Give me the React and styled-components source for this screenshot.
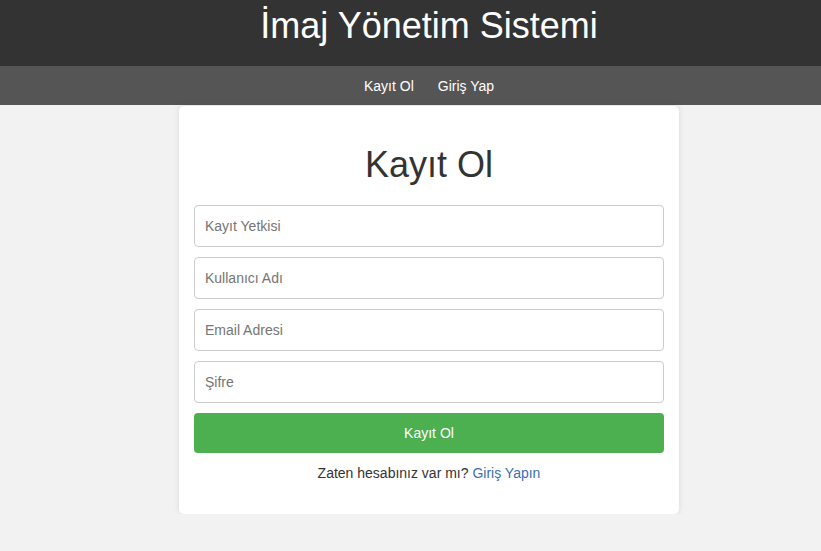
import React from "react";
import styled, { createGlobalStyle } from "styled-components";

const GlobalStyle = createGlobalStyle`
  body {
    margin: 0;
    background: #f2f2f2;
    font-family: "Liberation Sans", Arial, sans-serif;
    color: #333;
  }
`;

// the page is centred a little right of the window middle
const Page = styled.div`
  padding-left: 37px;
`;

const Header = styled.header`
  height: 66px;
  box-sizing: border-box;
  padding-top: 7px;
  margin-left: -37px;
  padding-left: 37px;
  background: #333;
  text-align: center;
`;

const Title = styled.h1`
  margin: 0;
  font-size: 36px;
  font-weight: normal;
  line-height: 37px;
  color: #fff;
`;

const Nav = styled.nav`
  height: 39px;
  margin-left: -37px;
  padding-left: 37px;
  background: #555;
  display: flex;
  justify-content: center;
  align-items: center;
`;

const NavLink = styled.a`
  padding: 0 12px;
  font-size: 14px;
  color: #fff;
  text-decoration: none;
`;

const Card = styled.div`
  width: 500px;
  box-sizing: border-box;
  margin: 1px auto 0;
  padding: 15px;
  background: #fff;
  border-radius: 5px;
  box-shadow: 0 0 6px rgba(0, 0, 0, 0.1);
`;

const Heading = styled.h2`
  margin: 24px 0 20px;
  font-size: 36px;
  font-weight: normal;
  line-height: 40px;
  text-align: center;
  color: #333;
`;

const Form = styled.form`
  display: flex;
  flex-direction: column;
  gap: 10px;
`;

const Input = styled.input`
  height: 42px;
  box-sizing: border-box;
  padding: 0 10px;
  border: 1px solid #ccc;
  border-radius: 4px;
  font-family: inherit;
  font-size: 14px;
  color: #333;
  outline: none;

  &::placeholder {
    color: #757575;
  }
`;

const Button = styled.button`
  height: 40px;
  border: none;
  border-radius: 4px;
  background: #4caf50;
  color: #fff;
  font-family: inherit;
  font-size: 14px;
  cursor: pointer;
`;

const Footer = styled.p`
  margin: 12px 0 18px;
  font-size: 14px;
  line-height: 16px;
  text-align: center;
`;

const Link = styled.a`
  color: #3b6fb0;
  text-decoration: none;
`;

const App = () => {
  const fields = ["Kayıt Yetkisi", "Kullanıcı Adı", "Email Adresi", "Şifre"];

  return (
    <Page>
      <GlobalStyle />
      <Header>
        <Title>İmaj Yönetim Sistemi</Title>
      </Header>
      <Nav>
        <NavLink href="#">Kayıt Ol</NavLink>
        <NavLink href="#">Giriş Yap</NavLink>
      </Nav>
      <Card>
        <Heading>Kayıt Ol</Heading>
        <Form onSubmit={(e) => e.preventDefault()}>
          {fields.map((f) => (
            <Input key={f} placeholder={f} type={f === "Şifre" ? "password" : "text"} />
          ))}
          <Button type="submit">Kayıt Ol</Button>
        </Form>
        <Footer>
          Zaten hesabınız var mı? <Link href="#">Giriş Yapın</Link>
        </Footer>
      </Card>
    </Page>
  );
};

export default App;
